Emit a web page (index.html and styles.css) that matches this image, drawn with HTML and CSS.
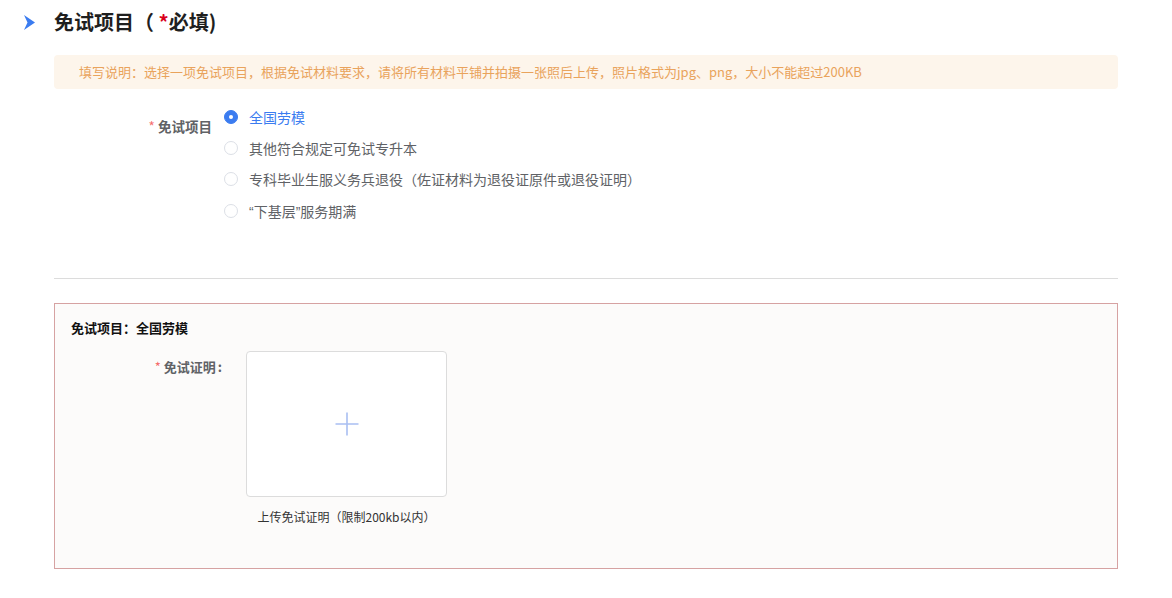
FILE: index.html
```html
<!DOCTYPE html>
<html lang="zh-CN">
<head>
<meta charset="utf-8">
<title>免试项目</title>
<link rel="stylesheet" href="styles.css">
</head>
<body>
<div class="page">
  <div class="section-head">
    <svg class="chev" width="11" height="15" viewBox="0 0 11 15"><polygon points="0,0 11,7.5 0,15 3.5,7.5" fill="#3b7cf0"/></svg>
    <h2 class="section-title">免试项目（ <span class="req">*</span>必填)</h2>
  </div>

  <div class="notice">填写说明：选择一项免试项目，根据免试材料要求，请将所有材料平铺并拍摄一张照后上传，照片格式为jpg、png，大小不能超过200KB</div>

  <div class="form-row">
    <div class="form-label"><span class="star">*</span> 免试项目</div>
    <div class="radio-group">
      <label class="radio checked"><span class="radio-dot"></span><span class="radio-text">全国劳模</span></label>
      <label class="radio"><span class="radio-dot"></span><span class="radio-text">其他符合规定可免试专升本</span></label>
      <label class="radio"><span class="radio-dot"></span><span class="radio-text">专科毕业生服义务兵退役（佐证材料为退役证原件或退役证明）</span></label>
      <label class="radio"><span class="radio-dot"></span><span class="radio-text"><span class="q">“</span>下基层<span class="q">”</span>服务期满</span></label>
    </div>
  </div>

  <div class="divider"></div>

  <div class="detail-box">
    <div class="detail-title">免试项目：全国劳模</div>
    <div class="upload-row">
      <div class="upload-label"><span class="star">*</span> 免试证明<span class="colon">:</span></div>
      <div class="upload-col">
        <div class="upload-box">
          <svg width="24" height="24" viewBox="0 0 24 24"><path d="M12 0.5V23.5M0.5 12H23.5" stroke="#a9bff2" stroke-width="1.6" fill="none"/></svg>
        </div>
        <div class="upload-caption">上传免试证明（限制200kb以内）</div>
      </div>
    </div>
  </div>
</div>
</body>
</html>
```

FILE: styles.css
```css
* { box-sizing: border-box; }
body {
  margin: 0;
  background: #fff;
  font-family: "Noto Sans CJK SC", "Noto Sans", "Liberation Sans", sans-serif;
  color: #333;
}
.page {
  padding: 0 54px 0 54px;
}
.section-head {
  display: flex;
  align-items: center;
  height: 44px;
  margin-left: -30px;
  gap: 19px;
}
.chev { display: block; margin-top: 1px; }
.section-title {
  margin: 0;
  font-size: 20px;
  font-weight: 700;
  color: #1f1f1f;
  line-height: 44px;
}
.req { color: #d9001b; }
.notice {
  margin-top: 11px;
  height: 34px;
  line-height: 34px;
  padding-left: 25px;
  background: #fdf5eb;
  border-radius: 4px;
  color: #e9a35c;
  font-size: 13px;
}
.form-row {
  display: flex;
  margin-top: 12px;
}
.form-label {
  width: 158px;
  text-align: right;
  margin-top: 10px;
  line-height: 31px;
  font-size: 13.5px;
  font-weight: 700;
  color: #606266;
}
.star { color: #f56c6c; font-weight: 400; }
.radio-group {
  margin-left: 12px;
  display: flex;
  flex-direction: column;
}
.radio {
  display: flex;
  align-items: center;
  height: 31.3px;
}
.radio-dot {
  width: 14px;
  height: 14px;
  border-radius: 50%;
  border: 1px solid #dcdfe6;
  background: #fff;
  position: relative;
}
.radio.checked .radio-dot {
  background: #3b7cf0;
  border-color: #3b7cf0;
}
.radio.checked .radio-dot::after {
  content: "";
  position: absolute;
  width: 4px;
  height: 4px;
  border-radius: 50%;
  background: #fff;
  left: 4px;
  top: 4px;
}
.radio-text {
  margin-left: 11px;
  font-size: 14px;
  color: #606266;
}
.q { font-family: "Liberation Sans", sans-serif; }
.radio.checked .radio-text { color: #3b7cf0; }
.divider {
  margin-top: 52px;
  height: 1px;
  background: #dcdcdc;
}
.detail-box {
  margin-top: 24px;
  border: 1px solid #d6a2a2;
  background: #fcfbfa;
  padding: 14px 16px 40px 16px;
  height: 266px;
}
.detail-title {
  font-size: 13px;
  font-weight: 700;
  color: #111;
  line-height: 20px;
}
.upload-row {
  display: flex;
  margin-top: 13px;
}
.upload-label {
  width: 151px;
  text-align: right;
  line-height: 32px;
  font-size: 13px;
  font-weight: 700;
  color: #606266;
}
.colon { margin-left: 2px; }
.upload-col {
  margin-left: 24px;
  display: flex;
  flex-direction: column;
  width: 201px;
}
.upload-box {
  width: 201px;
  height: 146px;
  border: 1px solid #dcdcdc;
  border-radius: 4px;
  background: #fff;
  display: flex;
  align-items: center;
  justify-content: center;
}
.upload-caption {
  margin-top: 10px;
  line-height: 20px;
  font-size: 12px;
  color: #333;
  text-align: center;
  white-space: nowrap;
}
```
